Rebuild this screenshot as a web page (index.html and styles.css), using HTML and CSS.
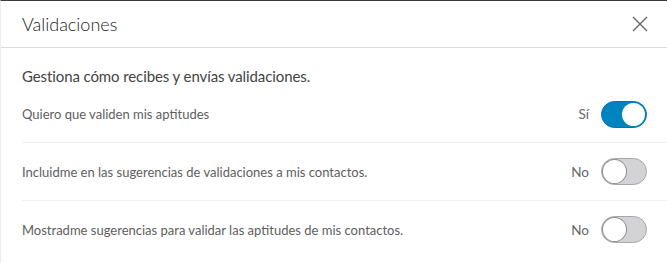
FILE: index.html
```html
<!doctype html>
<html>
<head>
<meta charset="utf-8">
<title>Validaciones</title>
<link rel="stylesheet" href="styles.css">
</head>
<body>
<div class="modal">
	<header class="modalHead">
		<h2 class="modalTitle">Validaciones</h2>
		<button class="close" aria-label="Cerrar">
			<svg width="16" height="16" viewBox="0 0 16 16"><path d="M1 1L15 15M15 1L1 15" stroke="#666" stroke-width="1.4" fill="none"/></svg>
		</button>
	</header>
	<div class="modalBody">
		<p class="intro">Gestiona cómo recibes y envías validaciones.</p>
		<ul class="settings">
			<li class="setting">
				<span class="label">Quiero que validen mis aptitudes</span>
				<span class="state">Sí</span>
				<span class="toggle toggleOn"><i></i></span>
			</li>
			<li class="setting">
				<span class="label">Incluidme en las sugerencias de validaciones a mis contactos.</span>
				<span class="state">No</span>
				<span class="toggle"><i></i></span>
			</li>
			<li class="setting">
				<span class="label">Mostradme sugerencias para validar las aptitudes de mis contactos.</span>
				<span class="state">No</span>
				<span class="toggle"><i></i></span>
			</li>
		</ul>
	</div>
</div>
</body>
</html>
```
FILE: styles.css
```css
html,
body {
	margin: 0;
	height: 100%;
	background: #fff;
	font-family: "Lato", "Liberation Sans", sans-serif;
}
ul {
	margin: 0;
	padding: 0;
	list-style: none;
}
.modal {
	height: 100%;
	box-sizing: border-box;
	border-top: 1px solid #3a3a3a;
	border-left: 1px solid #ececec;
}
.modalHead {
	display: flex;
	align-items: center;
	justify-content: space-between;
	height: 46px;
	padding: 0 19px 0 21px;
	border-bottom: 1px solid #dcdcdc;
}
.modalTitle {
	margin: 0;
	font-size: 18px;
	font-weight: 300;
	color: #222;
}
.close {
	display: flex;
	padding: 0;
	border: 0;
	background: none;
}
.modalBody {
	padding: 0 0 0 21px;
}
.intro {
	margin: 0;
	padding: 18px 0 0;
	font-size: 15px;
	line-height: 20px;
	color: #444;
	letter-spacing: -0.1px;
}
.setting {
	display: flex;
	align-items: center;
	height: 57px;
	padding-right: 20px;
	border-bottom: 1px solid #eef2f6;
}
.setting:first-child {
	height: 56px;
}
.setting:last-child {
	border-bottom: 0;
}
.label {
	flex: 1;
	font-size: 13px;
	color: #606060;
}
.state {
	margin-right: 12px;
	font-size: 13.5px;
	color: #666;
}
.toggle {
	position: relative;
	box-sizing: border-box;
	width: 46px;
	height: 27px;
	border-radius: 14px;
	background: #d3d3d6;
	border: 1px solid #a8a8a8;
}
.toggle i {
	position: absolute;
	left: 1px;
	top: 1px;
	width: 23px;
	height: 23px;
	border-radius: 50%;
	background: #fff;
	box-shadow: 0 0 0 1px #8f8f8f;
}
.toggleOn {
	background: #0084bf;
	border-color: #0073b1;
}
.toggleOn i {
	left: auto;
	right: 1px;
	box-shadow: none;
}
```
